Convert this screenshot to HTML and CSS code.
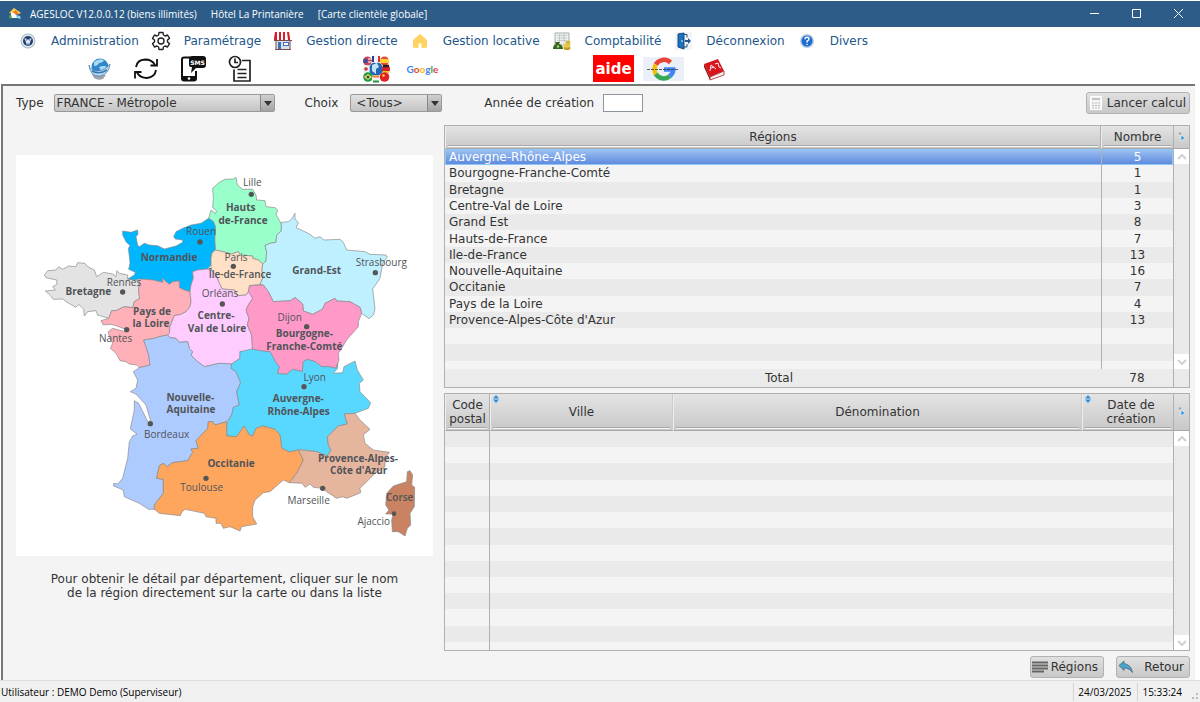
FILE: index.html
```html
<!DOCTYPE html>
<html lang="fr">
<head>
    <meta charset="UTF-8">
    <title>AGESLOC - Carte clientèle globale</title>
    <link rel="stylesheet" href="styles.css">
</head>
<body>

<header class="titlebar">
    <svg class="app-icon" viewBox="0 0 14 14">
        <path d="M1 6 6 1l7 5-2 1z" fill="#ffd34a"/>
        <path d="M3 6h5l1 5H3z" fill="#fff"/>
        <path d="M5 5l3-2 3 4-3 1z" fill="#f0772b"/>
        <path d="M8 8l4 1 1 3-4-1z" fill="#8fd0ee"/>
        <path d="M1 9l2-2 1 4-2 1z" fill="#55a555"/>
    </svg>
    <div class="title">
        <span>AGESLOC V12.0.0.12 (biens illimités)</span>
        <span>Hôtel La Printanière</span>
        <span>[Carte clientèle globale]</span>
    </div>
    <div class="window-buttons">
        <button type="button" aria-label="Réduire"><svg viewBox="0 0 10 10"><path d="M0 5.5h9"/></svg></button>
        <button type="button" aria-label="Agrandir"><svg viewBox="0 0 10 10"><path d="M.5 1.5h8v8h-8z"/></svg></button>
        <button type="button" aria-label="Fermer"><svg viewBox="0 0 10 10"><path d="M0 1l9 9M9 1l-9 9"/></svg></button>
    </div>
</header>

<nav class="menu">
    <a href="#">
        <svg viewBox="0 0 20 20">
            <circle cx="10" cy="10" r="7.5" fill="#aeb9c8"/>
            <circle cx="10" cy="10" r="6.5" fill="#e3e8ee"/>
            <circle cx="10" cy="10" r="5" fill="#1f3f73"/>
            <path d="M6.500 8h2M11.500 8h2M7.500 8l1.500 4.500 1-4 1 4 1.500-4.500" fill="none" stroke="#e4ecf6" stroke-width="1.200"/>
        </svg>
        Administration
    </a>
    <a href="#">
        <svg viewBox="0 0 20 20" fill="none" stroke="#222" stroke-width="1.400" stroke-linejoin="round">
            <path d="M8 1.500h4l.4 2.500 1.800 1 2.300-1 2 3.400-2 1.600v2l2 1.600-2 3.400-2.300-1-1.800 1-.4 2.500H8l-.4-2.500-1.800-1-2.300 1-2-3.400 2-1.600V9l-2-1.600 2-3.400 2.300 1 1.800-1z"/>
            <circle cx="10" cy="10" r="3"/>
        </svg>
        Paramétrage
    </a>
    <a href="#">
        <svg viewBox="0 0 20 20">
            <path d="M3 9h14v9H3z" fill="#d9dfe8"/>
            <path d="M2 1h16l1 6v2H1V7z" fill="#fff"/>
            <path d="M2 1h2v8H1V7zM6 1h2v8H6zM10 1h2v8h-2zM14 1h2l1 6v2h-2z" fill="#d5202c"/>
            <path d="M5 11h3v7H5zM10 11h6v4h-6z" fill="#3d73b5"/>
            <path d="M11 12h4v2h-4z" fill="#fff"/>
            <path d="M1 9.500h18M2 18.500h16M3 9v9M17 9v9" stroke="#7a4a4a" fill="none"/>
        </svg>
        Gestion directe
    </a>
    <a href="#">
        <svg viewBox="0 0 20 20">
            <path d="M10 3.500l6.500 5.500v6.500q0 1-1 1H12V12H8v4.500H4.500q-1 0-1-1V9z" fill="#ffd261" stroke="#ffd261" stroke-linejoin="round"/>
        </svg>
        Gestion locative
    </a>
    <a href="#">
        <svg viewBox="0 0 20 20">
            <path d="M3 2h14v12H3z" fill="#edf0ed" stroke="#a5ada5"/>
            <path d="M5 4.500h10M5 7h10M5 9.500h10M7.500 3v9M12 3v9" stroke="#b4bcc4" stroke-width=".7"/>
            <path d="M1 18q0-4 3-5l-1-2h5l-1 2q4 1 4 5z" fill="#35661d"/>
            <circle cx="6" cy="15.500" r="1.300" fill="#a8c98b"/>
            <ellipse cx="15" cy="17" rx="3.500" ry="2" fill="#c69d24"/>
            <ellipse cx="15" cy="14.500" rx="3.500" ry="2" fill="#e7c94d"/>
            <ellipse cx="16" cy="11.500" rx="2.500" ry="2" fill="#d6b53c"/>
        </svg>
        Comptabilité
    </a>
    <a href="#">
        <svg viewBox="0 0 20 20">
            <path d="M2 1h17v18H2z" fill="#f3f4f7"/>
            <path d="M5 3l6-1v16l-6-2z" fill="#1a73bd" stroke="#174a7c"/>
            <path d="M11 3.500h3v3M14 13v3h-3" fill="none" stroke="#234f7b"/>
            <path d="M12 9h3V7L18 10l-3 3v-2h-3z" fill="#225a92"/>
            <circle cx="9" cy="10" r=".8" fill="#fff"/>
        </svg>
        Déconnexion
    </a>
    <a href="#">
        <svg viewBox="0 0 20 20">
            <circle cx="10" cy="10" r="7" fill="#b9cbe2"/>
            <circle cx="10" cy="10" r="5.500" fill="#1d6bd0"/>
            <path d="M8 8.300q0-2 2-2t2 1.700q0 1.200-2 2.200v1.300M10 12.700v1.300" fill="none" stroke="#fff" stroke-width="1.400"/>
        </svg>
        Divers
    </a>
</nav>

<div class="toolbar">
    <div class="tool-group">
        <button type="button" aria-label="Internet">
            <svg width="24" height="24" viewBox="0 0 24 24">
                <path d="M5 17l14 1-3 4q-5 2-9-1z" fill="#9aa3ae"/>
                <circle cx="13" cy="10" r="8.500" fill="#2f86c8"/>
                <path d="M7 5q5-4 10-2-1 3-5 3-1 3-5 3zM12 10q5-2 8 0-2 4-6 4z" fill="#a8dcf5"/>
                <path d="M2 8q1 6 9 6 8-1 12-7-1 10-10 12Q3 20 2 8z" fill="#c5dced" stroke="#4a82b8" stroke-width=".8"/>
                <path d="M5 14q7 4 15-1" fill="none" stroke="#2f78b5" stroke-width="1.500"/>
            </svg>
        </button>
        <button type="button" aria-label="Actualiser">
            <svg width="26" height="24" viewBox="0 0 26 24" fill="none" stroke="#111" stroke-width="1.800">
                <path d="M3 10Q4 3 12 2.500q7 0 10 5.500M23 13q-1 7-9 8-7 0-10-5.500"/>
                <path d="M24 2v6.500h-6.500M2 21.500V15h6.500"/>
            </svg>
        </button>
        <button type="button" aria-label="SMS">
            <svg width="28" height="28" viewBox="0 0 28 28">
                <path d="M11 2.500H5q-2 0-2 2v19q0 2 2 2h10q2 0 2-2V16" fill="none" stroke="#111" stroke-width="2"/>
                <path d="M3 21h14v4q0 1-2 1H5q-2 0-2-1z" fill="#111"/>
                <circle cx="10" cy="23.500" r="1.300" fill="#fff"/>
                <path d="M13 1h11q3 0 3 3v6q0 3-3 3h-7l-5 5 1-6q-3 0-3-2V4q0-3 3-3z" fill="#111"/>
                <text class="sms-text" x="18.500" y="10" text-anchor="middle">SMS</text>
            </svg>
        </button>
        <button type="button" aria-label="Historique">
            <svg width="26" height="28" viewBox="0 0 26 28" fill="none" stroke="#222" stroke-width="1.700">
                <circle cx="8" cy="7" r="5.500"/>
                <path d="M8 3.500V7.500h3M15 5.500h8v20.500H7V14.500M10.500 14.500h9M10.500 18.500h9M10.500 22.500h9"/>
            </svg>
        </button>
    </div>
    <div class="tool-group languages">
        <button type="button" aria-label="Langues">
            <svg width="28" height="28" viewBox="0 0 28 28">
                <circle cx="14" cy="14" r="7" fill="#2267b5"/>
                <path d="M10 10l5-2 2 4-3 2v5l-4-3z" fill="#c5e2f2"/>
                <circle cx="5.500" cy="6" r="4.500" fill="#c2475a"/><path d="M1.500 4h4v4h-4z" fill="#384e9e"/><path d="M6 4h4M6 7h4" stroke="#fff"/>
                <circle cx="14" cy="4" r="4" fill="#f5f5fa"/><path d="M11 1v6" stroke="#2c3e90" stroke-width="2"/><path d="M17 1v6" stroke="#d62f3a" stroke-width="2"/>
                <circle cx="22.500" cy="6" r="4.500" fill="#e74b32"/><path d="M18 6h9" stroke="#ffd334" stroke-width="4"/>
                <circle cx="4" cy="14" r="3.800" fill="#eee"/><circle cx="4" cy="14" r="1.800" fill="#c33"/>
                <circle cx="24" cy="14" r="4" fill="#d8222b"/><path d="M21 11h6" stroke="#222" stroke-width="2.500"/><path d="M21 17h6" stroke="#f4c71f" stroke-width="2"/>
                <circle cx="6" cy="22" r="4.800" fill="#1d9c47"/><path d="M6 19l4 3-4 3-4-3z" fill="#fae03c"/><circle cx="6" cy="22" r="1.500" fill="#24489a"/>
                <circle cx="14" cy="24" r="4" fill="#f2f2f2"/><path d="M11 21.500h6" stroke="#f17f2f" stroke-width="2"/><path d="M11 26.500h6" stroke="#2b9447" stroke-width="2"/>
                <circle cx="22.500" cy="22" r="4.800" fill="#e02325"/><circle cx="21.500" cy="20.500" r="1.200" fill="#ffdf38"/>
            </svg>
        </button>
        <button type="button" class="google-word">
            <span class="g-blue">G</span><span class="g-red">o</span><span class="g-yellow">o</span><span class="g-blue">g</span><span class="g-green">l</span><span class="g-red">e</span>
        </button>
    </div>
    <div class="tool-group help">
        <button type="button" class="aide">aide</button>
        <button type="button" aria-label="Règles de confidentialité">
            <svg width="41" height="24" viewBox="0 0 41 24">
                <path d="M0 0h41v24H0z" fill="#ebeff8"/>
                <g fill="none" stroke-width="4.500">
                    <path d="M27.500 5.500A9.500 9.500 0 0 0 12.800 7.500" stroke="#ea4335"/>
                    <path d="M12.800 7.500a9.500 9.500 0 0 0 0 9.500" stroke="#fbbc05"/>
                    <path d="M12.800 17a9.500 9.500 0 0 0 14 2.300" stroke="#34a853"/>
                    <path d="M26.800 19.300Q30.500 16 30.300 12.500H21" stroke="#4285f4"/>
                </g>
                <path d="M4 12.500h32" stroke="#333" stroke-width=".8" stroke-dasharray="3 1"/>
            </svg>
        </button>
        <button type="button" aria-label="Dictionnaire">
            <svg width="24" height="24" viewBox="0 0 24 24">
                <path d="M2 7l14-5 6 12-14 6z" fill="#d8151b"/>
                <path d="M2 7l6 13v3L2 10z" fill="#8d0c10"/>
                <path d="M8 20l14-6v4L8 23z" fill="#f5eeee" stroke="#a22" stroke-width=".8"/>
                <path d="M8 14l1-6 5 4M9 11l3-1M13 7l3-1 1 4 2 1" stroke="#fff" stroke-width=".9" fill="none"/>
            </svg>
        </button>
    </div>
</div>

<main class="content">
    <form class="filters">
        <label for="type">Type</label>
        <span class="select type-select">
            <select id="type"><option>FRANCE - Métropole</option></select>
        </span>
        <label for="choix">Choix</label>
        <span class="select choix-select">
            <select id="choix"><option>&lt;Tous&gt;</option></select>
        </span>
        <label for="annee">Année de création</label>
        <input type="text" id="annee">
        <button type="button" class="btn calc">
            <svg width="12" height="14" viewBox="0 0 12 14">
                <path d="M.5.500h11v13H.5z" fill="#f4f4f4" stroke="#fff"/>
                <path d="M2 3h8" stroke="#c4c4c4" stroke-width="2"/>
                <path d="M2 7h8M2 9.500h8M2 12h8" stroke="#bbb" stroke-dasharray="2 1"/>
            </svg>
            Lancer calcul
        </button>
    </form>

    <div class="columns">
        <section class="map-side">
            <svg class="map" viewBox="0 0 1251 1203">
                <g class="regions">
                    <path fill="#e3e3e3" d="M85 360L95 347 120 345 128 335 140 343 158 333 180 335 185 323 207 325 215 335 235 345 242 365 262 352 290 357 300 365 303 347 310 355 335 360 335 372 355 374 370 380 368 410 371 430 355 440 350 458 325 455 300 467 287 467 278 490 245 480 240 467 215 470 205 483 203 462 188 448 180 457 150 440 140 432 112 433 100 418 88 408 118 405 110 395 123 388 122 375 103 371 90 368z"/>
                    <path fill="#99ffcb" d="M590 100L610 82 627 73 652 72 660 67 664 90 680 103 710 103 720 120 722 135 747 137 750 155 777 158 785 165 780 178 792 200 796 208 796 228 782 240 780 262 762 265 747 272 752 290 750 318 740 327 727 315 710 310 710 303 672 300 667 290 647 297 612 288 598 285 596 255 598 215 592 200 578 190 585 165 598 175 602 168 590 158 592 130z"/>
                    <path fill="#00b7ff" d="M320 228L345 232 365 225 366 238 360 245 365 270 370 275 385 265 400 270 425 272 445 282 480 273 500 262 500 255 478 252 473 245 480 230 500 220 525 210 555 205 578 190 592 200 598 215 596 255 598 285 588 295 585 310 585 330 575 342 545 345 530 350 532 370 525 390 522 410 505 405 490 398 490 378 470 380 460 388 450 380 440 370 440 382 410 375 375 372 355 374 335 372 355 360 358 352 338 343 342 325 340 305 337 280 342 272 330 260 320 240z"/>
                    <path fill="#ffdfc5" d="M598 285L612 288 647 297 667 290 672 300 710 303 710 310 727 315 740 327 738 345 742 365 732 388 700 392 697 410 690 420 665 422 655 405 618 402 610 385 600 360 585 345 585 310 588 295z"/>
                    <path fill="#bff0ff" d="M796 202L817 200 827 192 837 175 837 192 847 203 840 218 862 228 882 238 897 250 912 245 924 255 972 253 982 262 992 285 1047 290 1062 298 1110 300 1114 307 1100 325 1092 370 1070 402 1077 462 1072 480 1059 491 1037 475 1032 457 1002 440 962 438 957 430 927 445 920 462 890 478 862 468 860 447 837 427 824 437 772 440 757 410 742 390 732 388 742 365 738 345 740 327 750 318 752 290 747 272 762 265 780 262 782 240 796 228z"/>
                    <path fill="#ffb0b9" d="M370 380L375 372 410 375 440 382 440 370 450 380 460 388 470 380 490 378 490 398 505 405 522 410 525 440 522 455 510 470 495 478 475 482 468 500 462 515 460 535 455 540 430 545 415 550 383 555 390 575 398 600 402 630 370 638 362 630 340 627 330 620 312 617 300 595 283 580 290 565 280 545 277 530 290 520 328 530 332 524 300 512 285 508 262 510 255 497 278 490 287 467 300 467 325 455 350 458 355 440 371 430 368 410z"/>
                    <path fill="#ffccff" d="M525 440L522 410 525 390 532 370 530 350 545 345 575 342 585 345 600 360 610 385 618 402 655 405 665 422 690 420 702 405 710 430 697 450 690 465 699 490 694 510 707 540 710 588 682 590 672 590 672 610 647 627 612 625 600 627 565 635 545 620 525 600 530 590 520 580 515 560 490 562 480 550 462 548 455 540 460 535 462 515 468 500 475 482 495 478 510 470 522 455z"/>
                    <path fill="#ff99c8" d="M702 392L742 390 757 410 772 440 824 437 837 427 860 447 862 468 890 478 920 462 927 445 957 430 962 438 1002 440 1032 457 1037 475 1027 500 1027 515 992 555 977 580 967 595 969 615 960 640 937 635 917 635 897 620 874 613 862 620 859 650 830 643 812 658 784 655 790 635 780 623 762 590 710 588 707 540 694 510 699 490 690 465 697 450 710 430 697 410z"/>
                    <path fill="#aecbff" d="M383 555L415 550 430 545 455 540 462 548 480 550 490 562 515 560 520 580 530 590 525 600 545 620 565 635 600 627 612 625 647 627 645 640 660 650 674 683 662 710 670 750 652 757 647 780 632 800 597 810 590 800 577 800 575 820 540 857 547 880 525 882 530 892 515 917 470 923 452 935 443 925 430 932 422 970 442 973 442 1015 415 1050 415 1063 398 1063 370 1045 325 1025 322 1005 293 993 293 985 305 987 320 970 335 910 340 860 350 843 363 837 343 822 355 765 355 737 368 745 398 805 403 795 390 750 360 717 343 710 360 700 365 675 352 650 370 638 402 630 398 600 390 575z"/>
                    <path fill="#59d8ff" d="M647 627L672 610 672 590 707 582 752 590 762 590 780 623 790 635 784 655 812 658 830 643 859 650 862 620 874 613 897 620 917 635 937 635 960 640 965 625 965 640 952 655 980 653 984 635 1017 618 1024 645 1042 675 1030 685 1032 710 1064 743 1057 760 1017 775 985 777 994 807 967 813 934 845 937 870 945 885 934 903 902 890 852 883 820 891 797 880 792 840 777 823 740 813 720 820 710 843 700 840 684 813 662 845 632 843 632 807 647 780 652 757 670 750 662 710 674 683 660 650 645 640z"/>
                    <path fill="#ffa65e" d="M577 800L590 800 597 810 632 800 632 843 662 845 684 813 700 840 710 843 720 820 740 813 777 823 792 840 797 880 820 891 847 885 862 915 842 955 820 983 802 975 762 1010 742 1013 717 1035 710 1055 710 1085 722 1107 677 1115 672 1128 642 1115 622 1120 615 1105 600 1105 600 1090 570 1085 565 1075 508 1063 498 1070 493 1082 430 1075 415 1063 415 1050 442 1015 442 973 422 970 430 932 443 925 452 935 470 923 515 917 530 892 525 882 547 880 540 857 575 820z"/>
                    <path fill="#e6b59e" d="M847 885L902 890 934 903 945 885 937 870 934 845 967 813 994 807 985 777 1017 775 1032 795 1062 823 1042 840 1047 865 1072 885 1120 892 1107 910 1107 935 1077 955 1052 980 1032 1000 1034 1013 1012 1022 992 1030 980 1025 962 1030 932 1010 920 1000 892 997 882 987 867 997 859 985 820 983 842 955 862 915z"/>
                    <path fill="#c98363" d="M1182 947L1190 960 1187 990 1196 997 1195 1055 1182 1075 1184 1110 1174 1120 1167 1143 1147 1130 1129 1130 1127 1095 1132 1077 1109 1077 1119 1065 1109 1050 1112 1015 1132 993 1172 980 1174 950z"/>
                </g>
                <g class="towns">
                    <circle cx="706" cy="118" r="8"/><circle cx="552" cy="261" r="8"/><circle cx="320" cy="411" r="8"/>
                    <circle cx="332" cy="524" r="8"/><circle cx="619" cy="447" r="8"/><circle cx="652" cy="334" r="8"/>
                    <circle cx="1078" cy="353" r="8"/><circle cx="872" cy="515" r="8"/><circle cx="403" cy="806" r="8"/>
                    <circle cx="570" cy="970" r="8"/><circle cx="864" cy="695" r="8"/><circle cx="920" cy="1000" r="8"/>
                    <circle cx="1134" cy="1076" r="7"/>
                    <text x="709" y="93">Lille</text>
                    <text x="555" y="240">Rouen</text>
                    <text x="324" y="394">Rennes</text>
                    <text x="299" y="562">Nantes</text>
                    <text x="612" y="427">Orléans</text>
                    <text x="660" y="317">Paris</text>
                    <text x="1096" y="332">Strasbourg</text>
                    <text x="821" y="497">Dijon</text>
                    <text x="452" y="850">Bordeaux</text>
                    <text x="557" y="1007">Toulouse</text>
                    <text x="896" y="678">Lyon</text>
                    <text x="878" y="1047">Marseille</text>
                    <text x="1073" y="1109">Ajaccio</text>
                    <text x="1151" y="1039" class="medium">Corse</text>
                    <text x="672" y="369" class="medium">Île-de-France</text>
                </g>
                <g class="names">
                    <text x="674" y="167">Hauts</text>
                    <text x="681" y="207">de-France</text>
                    <text x="459" y="317">Normandie</text>
                    <text x="217" y="419">Bretagne</text>
                    <text x="408" y="479">Pays de</text>
                    <text x="405" y="517">la Loire</text>
                    <text x="600" y="492">Centre-</text>
                    <text x="603" y="530">Val de Loire</text>
                    <text x="902" y="356">Grand-Est</text>
                    <text x="865" y="545">Bourgogne-</text>
                    <text x="865" y="584">Franche-Comté</text>
                    <text x="523" y="737">Nouvelle-</text>
                    <text x="525" y="775">Aquitaine</text>
                    <text x="645" y="935">Occitanie</text>
                    <text x="847" y="742">Auvergne-</text>
                    <text x="848" y="781">Rhône-Alpes</text>
                    <text x="1026" y="920">Provence-Alpes-</text>
                    <text x="1028" y="958">Côte d'Azur</text>
                </g>
            </svg>
            <p class="hint">Pour obtenir le détail par département, cliquer sur le nom<br>de la région directement sur la carte ou dans la liste</p>
        </section>

        <section class="tables">
            <div class="grid">
                <table class="regions-table">
                    <thead>
                        <tr><th>Régions</th><th class="nb">Nombre</th></tr>
                    </thead>
                    <tbody>
                        <tr class="selected"><td>Auvergne-Rhône-Alpes</td><td class="nb">5</td></tr>
                        <tr><td>Bourgogne-Franche-Comté</td><td class="nb">1</td></tr>
                        <tr><td>Bretagne</td><td class="nb">1</td></tr>
                        <tr><td>Centre-Val de Loire</td><td class="nb">3</td></tr>
                        <tr><td>Grand Est</td><td class="nb">8</td></tr>
                        <tr><td>Hauts-de-France</td><td class="nb">7</td></tr>
                        <tr><td>Ile-de-France</td><td class="nb">13</td></tr>
                        <tr><td>Nouvelle-Aquitaine</td><td class="nb">16</td></tr>
                        <tr><td>Occitanie</td><td class="nb">7</td></tr>
                        <tr><td>Pays de la Loire</td><td class="nb">4</td></tr>
                        <tr><td>Provence-Alpes-Côte d'Azur</td><td class="nb">13</td></tr>
                        <tr><td></td><td class="nb"></td></tr>
                        <tr><td></td><td class="nb"></td></tr>
                        <tr class="partial"><td></td><td class="nb"></td></tr>
                    </tbody>
                    <tfoot>
                        <tr><td class="total">Total</td><td class="nb">78</td></tr>
                    </tfoot>
                </table>
                <div class="scroll">
                    <button type="button" class="more" aria-label="Options">
                        <svg viewBox="0 0 10 14"><path d="M2 3l2 1" stroke="#9ab" fill="none"/><path d="M4 5l4 3-4 3z" fill="#2a96e0" stroke="#fff" stroke-width=".6"/></svg>
                    </button>
                    <button type="button" aria-label="Monter"><svg viewBox="0 0 10 6"><path d="M1 5l4-4 4 4"/></svg></button>
                    <div class="track"></div>
                    <button type="button" aria-label="Descendre"><svg viewBox="0 0 10 6"><path d="M1 1l4 4 4-4"/></svg></button>
                    <div class="foot"></div>
                </div>
            </div>

            <div class="grid clients">
                <table class="clients-table">
                    <thead>
                        <tr>
                            <th class="code">Code postal</th>
                            <th class="ville"><svg class="sort" viewBox="0 0 8 8"><path d="M1 3.500L4 0l3 3.500zM1 4.500L4 8l3-3.500z"/></svg>Ville</th>
                            <th class="denomination">Dénomination</th>
                            <th class="date"><svg class="sort" viewBox="0 0 8 8"><path d="M1 3.500L4 0l3 3.500zM1 4.500L4 8l3-3.500z"/></svg>Date de création</th>
                        </tr>
                    </thead>
                    <tbody>
                        <tr><td></td><td></td><td></td><td></td></tr>
                        <tr><td></td><td></td><td></td><td></td></tr>
                        <tr><td></td><td></td><td></td><td></td></tr>
                        <tr><td></td><td></td><td></td><td></td></tr>
                        <tr><td></td><td></td><td></td><td></td></tr>
                        <tr><td></td><td></td><td></td><td></td></tr>
                        <tr><td></td><td></td><td></td><td></td></tr>
                        <tr><td></td><td></td><td></td><td></td></tr>
                        <tr><td></td><td></td><td></td><td></td></tr>
                        <tr><td></td><td></td><td></td><td></td></tr>
                        <tr><td></td><td></td><td></td><td></td></tr>
                        <tr><td></td><td></td><td></td><td></td></tr>
                        <tr><td></td><td></td><td></td><td></td></tr>
                        <tr class="partial"><td></td><td></td><td></td><td></td></tr>
                    </tbody>
                </table>
                <div class="scroll">
                    <button type="button" class="more" aria-label="Options">
                        <svg viewBox="0 0 10 14"><path d="M2 3l2 1" stroke="#9ab" fill="none"/><path d="M4 5l4 3-4 3z" fill="#2a96e0" stroke="#fff" stroke-width=".6"/></svg>
                    </button>
                    <button type="button" aria-label="Monter"><svg viewBox="0 0 10 6"><path d="M1 5l4-4 4 4"/></svg></button>
                    <div class="track"></div>
                    <button type="button" aria-label="Descendre"><svg viewBox="0 0 10 6"><path d="M1 1l4 4 4-4"/></svg></button>
                </div>
            </div>

            <div class="actions">
                <button type="button" class="btn">
                    <svg width="16" height="12" viewBox="0 0 16 12"><path d="M0 1.500h16M0 4.500h16M0 7.500h16M0 10.500h12" stroke="#666" stroke-width="2"/></svg>
                    Régions
                </button>
                <button type="button" class="btn">
                    <svg width="16" height="12" viewBox="0 0 16 12"><path d="M1 4.500L6 0v2.500q7 1 8.500 9-3-4.500-8.500-4.500v2.500z" fill="#4ba3c7" stroke="#33617a" stroke-width=".7"/></svg>
                    Retour
                </button>
            </div>
        </section>
    </div>
</main>

<footer class="statusbar">
    <span class="user">Utilisateur : DEMO Demo (Superviseur)</span>
    <span class="cell">24/03/2025</span>
    <span class="cell">15:33:24</span>
    <svg class="grip" viewBox="0 0 12 12"><path d="M8 4h2v2H8zM8 8h2v2H8zM4 8h2v2H4z"/></svg>
</footer>

</body>
</html>
```
FILE: styles.css
```css
* {
    box-sizing: border-box;
}

body {
    margin: 0;
    height: 100vh;
    display: flex;
    flex-direction: column;
    background: white;
    color: #333;
    font-family: "DejaVu Sans", Verdana, sans-serif;
    font-size: 12px;
    line-height: 14px;
}

button, input, select {
    font: inherit;
    color: inherit;
}

button {
    margin: 0;
    padding: 0;
    border: none;
    background: none;
}

/* title bar */
.titlebar {
    display: flex;
    align-items: center;
    height: 27px;
    border-top: 1px solid white;
    padding-left: 8px;
    background: #2d5c88;
    color: white;
    font-family: "Open Sans", "Segoe UI", sans-serif;
    font-size: 10px;
}

.app-icon {
    width: 14px;
    height: 14px;
    margin-right: 8px;
}

.title {
    display: flex;
    flex: 1;
    gap: 14px;
}

.window-buttons {
    display: flex;
}

.window-buttons button {
    width: 42px;
    height: 26px;
}

.window-buttons svg {
    width: 10px;
    height: 10px;
    fill: none;
    stroke: white;
}

/* menu */
.menu {
    display: flex;
    gap: 12px;
    height: 28px;
    padding-left: 18px;
}

.menu a {
    display: flex;
    align-items: center;
    gap: 13px;
    color: #23568a;
    text-decoration: none;
}

.menu svg {
    width: 20px;
    height: 20px;
}

.toolbar {
    display: flex;
    height: 29px;
    padding-left: 75px;
}

.tool-group {
    display: flex;
}

.tool-group button {
    display: flex;
    align-items: center;
    justify-content: center;
    width: 47px;
    height: 28px;
}

.languages {
    margin-left: 89px;
}

.help {
    margin-left: 147px;
    gap: 9px;
}

.tool-group.help button {
    width: 41px;
}

.tool-group .aide {
    height: 27px;
    background: red;
    color: white;
    font-size: 15px;
    font-weight: bold;
}

.google-word {
    font-family: Lato, sans-serif;
    font-size: 10px;
    font-weight: bold;
}

.g-blue { color: #4285f4; }
.g-red { color: #ea4335; }
.g-yellow { color: #fbbc05; }
.g-green { color: #34a853; }

.sms-text {
    font-size: 6px;
    font-weight: bold;
    fill: white;
}

/* content */
.content {
    flex: 1;
    margin: 0 5px 0 1px;
    padding: 6px 5px 0 13px;
    background: #f4f4f4;
    border-top: 2px solid #777;
    border-left: 2px solid #777;
}

.filters {
    display: flex;
    align-items: center;
    height: 22px;
    margin-bottom: 11px;
}

.select {
    position: relative;
    margin: 0 30px 0 10px;
}

.select select {
    display: block;
    appearance: none;
    width: 100%;
    height: 18px;
    padding: 0 16px 0 2px;
    border: 1px solid #999;
    border-radius: 2px;
    background: linear-gradient(#e2e2e2, #c4c4c4);
}

.select::after {
    content: "";
    position: absolute;
    right: 3px;
    top: 7px;
    border: 4px solid transparent;
    border-top: 5px solid #333;
    border-bottom: none;
}

.select::before {
    content: "";
    position: absolute;
    right: 1px;
    top: 1px;
    width: 13px;
    height: 16px;
    border-left: 1px solid #888;
    background: linear-gradient(#d0d0d0, #a4a4a4);
}

.type-select {
    width: 221px;
}

.choix-select {
    width: 92px;
    margin: 0 42px 0 12px;
}

.choix-select select {
    padding-left: 5px;
}

.filters input {
    width: 40px;
    height: 18px;
    margin-left: 9px;
    padding: 1px 3px;
    border: 1px solid #8f959d;
    background: white;
}

.btn {
    display: flex;
    align-items: center;
    justify-content: space-between;
    width: 74px;
    height: 22px;
    padding: 0 5px 0 1px;
    border: 1px solid #b2b2b2;
    border-radius: 3px;
    background: linear-gradient(#e0e0e0, #c8c8c8);
}

.calc {
    width: 104px;
    margin-left: auto;
    padding: 0 3px;
}

.columns {
    display: flex;
    gap: 11px;
}

.map-side {
    width: 417px;
    padding-top: 30px;
}

.map {
    display: block;
    width: 100%;
    background: white;
}

.regions path {
    stroke: #888;
    stroke-width: 2;
    stroke-linejoin: round;
}

.map text {
    text-anchor: middle;
    fill: #505458;
    font-family: "Open Sans", "Noto Sans", sans-serif;
    font-size: 30px;
}

.towns circle {
    fill: #555;
}

.names text {
    font-weight: bold;
}

.map .medium {
    font-weight: 600;
}

.hint {
    margin: 16px 0 0;
    text-align: center;
}

/* tables */
.tables {
    flex: 1;
}

.grid {
    display: flex;
    border: 1px solid #b0b0b0;
    margin-bottom: 5px;
}

.grid table {
    flex: 1;
    border-collapse: separate;
    border-spacing: 0;
    table-layout: fixed;
}

.regions-table {
    height: 261px;
}

.clients-table {
    height: 256px;
}

th {
    position: relative;
    height: 23px;
    padding: 0 2px;
    border-bottom: 1px solid #a8a8a8;
    border-right: 1px solid #b0b0b0;
    border-left: 1px solid #eee;
    font-weight: normal;
    background:
        linear-gradient(#aaa, #aaa) center bottom 2px / calc(100% - 4px) 1px no-repeat,
        linear-gradient(#f4f4f4, #f4f4f4) center bottom 1px / calc(100% - 4px) 1px no-repeat,
        linear-gradient(#e4e4e4, #c8c8c8);
}

th:last-child {
    border-right: none;
}

td {
    height: 16px;
    padding: 0 4px;
    line-height: 14px;
    white-space: nowrap;
}

tbody tr:nth-child(odd) {
    background: #eaeaea;
}

tbody .partial td {
    height: 8px;
}

.nb {
    width: 72px;
    text-align: center;
}

.regions-table tbody .nb {
    border-left: 1px solid #b0b0b0;
}

.regions-table tbody .selected {
    color: white;
    background: linear-gradient(#9fc3f3, #5b87dd);
    box-shadow: inset 0 0 0 1px #8cc8f5;
}

tfoot {
    background: #ebebeb;
}

tfoot td {
    height: 18px;
    text-align: center;
}

.total {
    padding-left: 16px;
}

.clients-table th {
    height: 37px;
}

.clients-table th.code {
    width: 45px;
    padding: 0;
}

.clients-table td:first-child {
    border-right: 1px solid #b0b0b0;
}

.ville {
    width: 183px;
}

.ville, .denomination {
    border-right-color: #ccc;
}

.date {
    width: 91px;
}

.clients-table th.date {
    padding: 0 14px 0 20px;
}

.sort {
    position: absolute;
    left: 1px;
    top: 1px;
    width: 8px;
    height: 8px;
    fill: #2a8fdc;
}

.scroll {
    display: flex;
    flex-direction: column;
    width: 16px;
    border-left: 1px solid #b0b0b0;
    background: #eaeaea;
}

.scroll button {
    display: flex;
    align-items: center;
    justify-content: center;
    height: 15px;
    background: white;
}

.scroll button svg {
    width: 10px;
    height: 6px;
    fill: none;
    stroke: #d0d0d0;
    stroke-width: 2;
}

.scroll .more {
    height: 23px;
    border-bottom: 1px solid #a8a8a8;
    background: linear-gradient(#e4e4e4, #c8c8c8);
}

.scroll .more svg {
    height: 14px;
}

.clients .scroll .more {
    height: 37px;
}

.track {
    flex: 1;
}

.foot {
    height: 18px;
}

.actions {
    display: flex;
    justify-content: flex-end;
    gap: 12px;
}

/* status bar */
.statusbar {
    display: flex;
    align-items: center;
    height: 22px;
    padding-left: 1px;
    border-top: 1px solid #ddd;
    background: #f0f0f0;
    color: black;
    font-family: "Open Sans", Tahoma, sans-serif;
    font-size: 10px;
}

.user {
    flex: 1;
}

.cell {
    padding: 2px 6px 2px 4px;
    border-left: 1px solid #d4d4d4;
}

.grip {
    width: 12px;
    height: 12px;
    margin-top: 6px;
    fill: #bbb;
}
```
